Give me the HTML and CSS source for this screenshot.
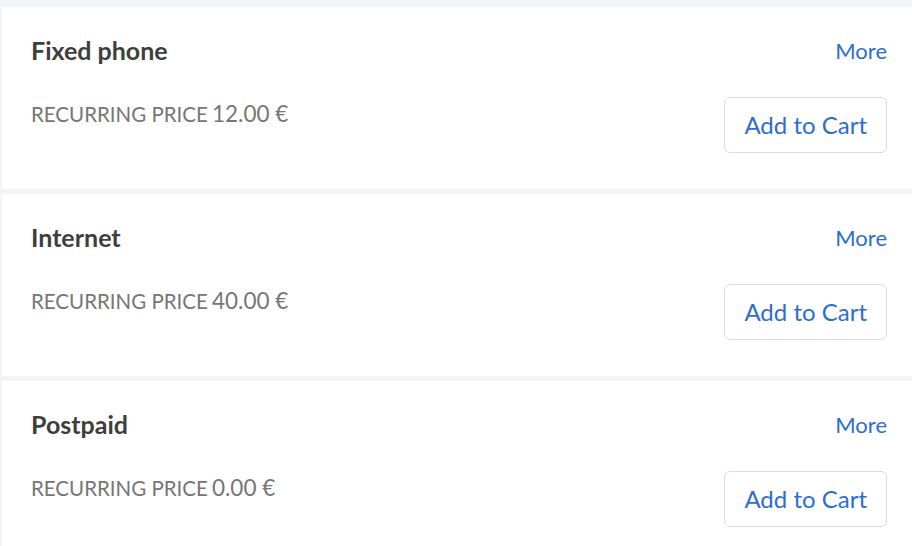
FILE: index.html
```html
<!DOCTYPE html>
<html lang="en">
<head>
<meta charset="utf-8">
<title>Products</title>
<link rel="stylesheet" href="styles.css">
</head>
<body>
<div class="list">
  <div class="card">
    <div class="head">
      <span class="title">Fixed phone</span>
      <a class="more" href="#">More</a>
    </div>
    <div class="body">
      <div class="price"><span class="label">RECURRING PRICE</span> <span class="value">12.00 €</span></div>
      <button class="cart">Add to Cart</button>
    </div>
  </div>
  <div class="card">
    <div class="head">
      <span class="title">Internet</span>
      <a class="more" href="#">More</a>
    </div>
    <div class="body">
      <div class="price"><span class="label">RECURRING PRICE</span> <span class="value">40.00 €</span></div>
      <button class="cart">Add to Cart</button>
    </div>
  </div>
  <div class="card">
    <div class="head">
      <span class="title">Postpaid</span>
      <a class="more" href="#">More</a>
    </div>
    <div class="body">
      <div class="price"><span class="label">RECURRING PRICE</span> <span class="value">0.00 €</span></div>
      <button class="cart">Add to Cart</button>
    </div>
  </div>
</div>
</body>
</html>
```
FILE: styles.css
```css
html, body {
  margin: 0;
  height: 100%;
  overflow: hidden;
}
body {
  background: #f3f4f8;
  font-family: Lato, "Open Sans", sans-serif;
}
.list {
  display: flex;
  flex-direction: column;
  gap: 5px;
  padding: 7px 0 0 2px;
}
.card {
  background: #ffffff;
  padding: 27px 25px 36px 29px;
  display: flex;
  flex-direction: column;
  gap: 31px;
}
.head {
  display: flex;
  justify-content: space-between;
  align-items: center;
  height: 32px;
}
.title {
  font-weight: 700;
  font-size: 25px;
  color: #3e3e3c;
}
.more {
  font-size: 22px;
  color: #2d6dd0;
  text-decoration: none;
}
.body {
  display: flex;
  justify-content: space-between;
  align-items: flex-start;
}
.price {
  margin-top: 5px;
  line-height: 24px;
  color: #767676;
}
.label {
  font-size: 20.5px;
}
.value {
  font-size: 22.5px;
}
.cart {
  height: 56px;
  padding: 0 19px 2px;
  background: #ffffff;
  border: 1px solid #dcdcdc;
  border-radius: 6px;
  font-family: inherit;
  font-size: 24px;
  color: #2d6dd0;
}
```
